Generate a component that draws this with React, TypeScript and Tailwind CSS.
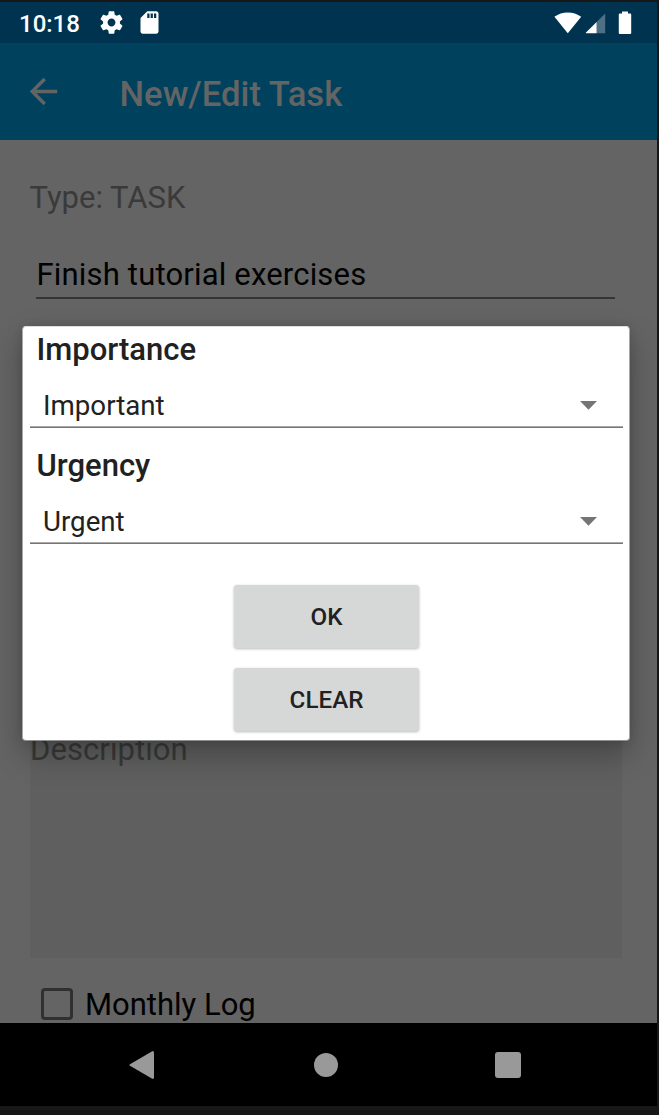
import { MdArrowBack, MdSdStorage } from "react-icons/md";

function GearIcon() {
  return (
    <svg className="size-[27px]" viewBox="0 0 24 24" fill="currentColor">
      <path d="M19.43 12.98c.04-.32.07-.64.07-.98s-.03-.66-.07-.98l2.11-1.65c.19-.15.24-.42.12-.64l-2-3.46c-.12-.22-.39-.3-.61-.22l-2.49 1c-.52-.4-1.08-.73-1.69-.98l-.38-2.65C14.46 2.18 14.25 2 14 2h-4c-.25 0-.46.18-.49.42l-.38 2.65c-.61.25-1.17.59-1.69.98l-2.49-1c-.23-.09-.49 0-.61.22l-2 3.46c-.13.22-.07.49.12.64l2.11 1.65c-.04.32-.07.65-.07.98s.03.66.07.98l-2.11 1.65c-.19.15-.24.42-.12.64l2 3.46c.12.22.39.3.61.22l2.49-1c.52.4 1.08.73 1.69.98l.38 2.65c.03.24.24.42.49.42h4c.25 0 .46-.18.49-.42l.38-2.65c.61-.25 1.17-.59 1.69-.98l2.49 1c.23.09.49 0 .61-.22l2-3.46c.12-.22.07-.49-.12-.64l-2.11-1.65zM12 15.5c-1.93 0-3.5-1.57-3.5-3.5s1.57-3.5 3.5-3.5 3.5 1.57 3.5 3.5-1.57 3.5-3.5 3.5z" />
    </svg>
  );
}

function StatusBar() {
  return (
    <div className="flex h-[41px] shrink-0 items-center justify-between bg-[#003350] pr-[25px] pl-[19px] text-white">
      <div className="flex items-center">
        <span className="w-[79px] pt-[2px] text-[24px] leading-[30px] font-medium whitespace-nowrap">10:18</span>
        <GearIcon />
        <MdSdStorage className="ml-[11px] size-[27px]" />
      </div>
      <div className="flex items-center">
        <svg className="h-[22px] w-[28px]" viewBox="0 0 28 22">
          <path d="M.4 4.8C8-.9 19.5-.9 27.2 4.8L13.8 21.2Z" fill="#fff" />
        </svg>
        <svg className="ml-[3px] h-[22px] w-[21px]" viewBox="0 0 21 22">
          <path d="M20.2 1.5v19.7H11.6V10Z" fill="#4d7085" />
          <path d="M11.6 10V21.2H1.2Q.4 21.2 1 20.5Z" fill="#fff" />
        </svg>
        <svg className="ml-[12px] h-[24px] w-[14px]" viewBox="0 0 14 24">
          <path d="M4 .4h6v2h2.2q1 0 1 1v18.6q0 1-1 1H1.8q-1 0-1-1V3.4q0-1 1-1H4z" fill="#fff" />
        </svg>
      </div>
    </div>
  );
}

function AppBar() {
  return (
    <header className="flex h-[97px] shrink-0 items-center bg-[#00425e] pl-[23px] text-[#646464]">
      <MdArrowBack className="size-[41px]" />
      <h1 className="mt-1 ml-[55.5px] text-[34.65px] leading-10 font-medium whitespace-nowrap">New/Edit Task</h1>
    </header>
  );
}

function TaskForm() {
  return (
    <main className="flex h-[883px] shrink-0 flex-col overflow-hidden bg-[#646464] pr-[35px] pl-[30px] text-[31px] leading-9 text-black">
      <div className="mt-[40px] -ml-[0.5px] text-[#3a3a3a]">Type: TASK</div>
      <div className="mt-[41px] mr-[7px] ml-[6px] h-[42px] border-b-2 border-[#353535] pl-[0.5px] tracking-[0.18px]">
        Finish tutorial exercises
      </div>
      <div className="mt-[433px] h-[228px] bg-[#5f5f5f] tracking-[0.08px] text-[#393939]">Description</div>
      <label className="mt-[29px] flex items-center">
        <span className="mb-[3px] ml-[11px] size-[32px] shrink-0 rounded-[4px] border-[3px] border-[#303030]" />
        <span className="ml-[12px]">Monthly Log</span>
      </label>
    </main>
  );
}

function Picker({ label, value }: { label: string; value: string }) {
  return (
    <div className="h-[116px]">
      <div className="pl-[6.5px] text-[31px] leading-9 font-medium">{label}</div>
      <div className="mt-[15px] flex h-[45px] items-start justify-between border-b border-[#757575] pr-[26px] pl-[13px] text-[27.7px] leading-[45px] shadow-[inset_0_-1px_0_#a8a8a8]">
        <span>{value}</span>
        <svg className="mt-[18px] h-[9px] w-[17px]" viewBox="0 0 17 9">
          <path d="M0 0h17L8.5 8.7Z" fill="#757575" />
        </svg>
      </div>
    </div>
  );
}

function DialogButton({ children }: { children: string }) {
  return (
    <button className="h-[63px] w-[185px] rounded-[3px] bg-[#d6d8d7] pt-px text-[24.2px] font-medium shadow-[0_1px_3px_rgba(0,0,0,0.28)]">
      {children}
    </button>
  );
}

function PriorityDialog() {
  return (
    <div className="absolute top-[326px] left-[22px] flex h-[415px] w-[608px] flex-col rounded-[4px] border border-t-[#dedede] border-r-[#a8a8a8] border-b-[#8f8f8f] border-l-[#a8a8a8] bg-white pt-[5px] pr-[6px] pl-[7px] text-[#212121] shadow-[0_14px_30px_rgba(0,0,0,0.27),0_0_8px_rgba(0,0,0,0.12)]">
      <Picker label="Importance" value="Important" />
      <Picker label="Urgency" value="Urgent" />
      <div className="mt-[21px] flex flex-col items-center gap-5">
        <DialogButton>OK</DialogButton>
        <DialogButton>CLEAR</DialogButton>
      </div>
    </div>
  );
}

function NavigationBar() {
  return (
    <nav className="flex h-[83px] shrink-0 items-center justify-between bg-black pr-[136px] pl-[129px]">
      <svg className="h-7 w-[25px]" viewBox="0 0 25 28">
        <path d="M1 13.2 22.8.4Q25-.6 25 1.8V26.2Q25 28.6 22.8 27.6L1 14.8Q-.3 14 1 13.2Z" fill="#999" />
      </svg>
      <span className="ml-[3px] size-6 rounded-full bg-[#999]" />
      <span className="size-[26px] rounded-[3px] bg-[#999]" />
    </nav>
  );
}

export default function App() {
  return (
    <div className="relative flex h-[1115px] w-[659px] flex-col overflow-hidden bg-[#171717] pt-[2px] pr-[2px] font-[Roboto,sans-serif]">
      <StatusBar />
      <AppBar />
      <TaskForm />
      <NavigationBar />
      <PriorityDialog />
    </div>
  );
}
